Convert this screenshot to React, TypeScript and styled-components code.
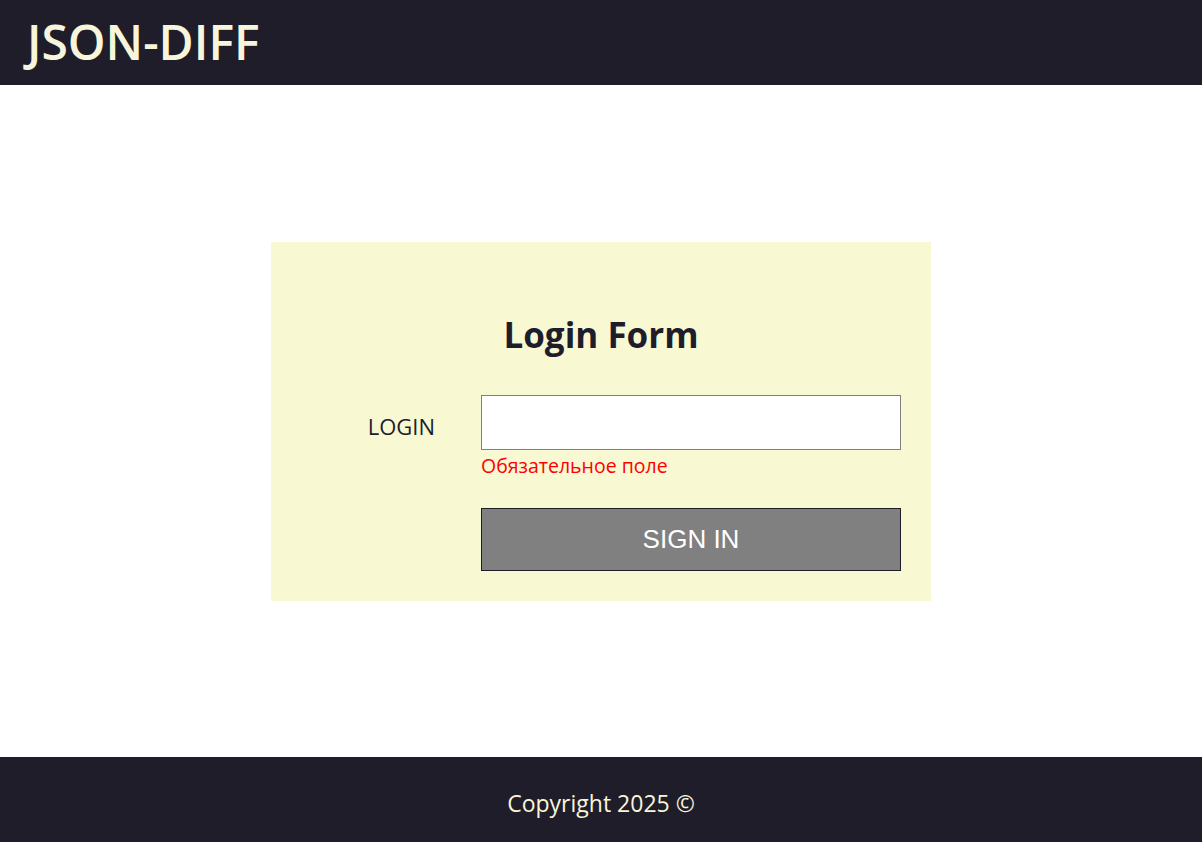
import React from "react";
import styled, { createGlobalStyle } from "styled-components";

const Global = createGlobalStyle`
  html, body { margin: 0; padding: 0; height: 100%; }
  body { font-family: "Open Sans", "Noto Sans", sans-serif; background: #ffffff; }
  #root { height: 100%; }
`;

const Page = styled.div`
  display: flex;
  flex-direction: column;
  height: 842px;
`;

const Header = styled.header`
  height: 85px;
  background: #201d2b;
  display: flex;
  align-items: center;
  padding-left: 27px;
  flex-shrink: 0;
`;

const Logo = styled.h1`
  margin: 0;
  font-size: 48px;
  font-weight: 600;
  color: #f7f6dc;
  line-height: 85px;
  padding-bottom: 2px;
`;

const Main = styled.main`
  flex: 1;
  display: flex;
  align-items: center;
  justify-content: center;
`;

const Card = styled.form`
  width: 660px;
  height: 359px;
  box-sizing: border-box;
  background: #f8f8d3;
  display: flex;
  flex-direction: column;
  align-items: center;
  padding-top: 71px;
`;

const Title = styled.h2`
  margin: 0 0 38px 0;
  font-size: 35px;
  font-weight: 700;
  color: #201d2b;
  line-height: 44px;
`;

const Row = styled.div`
  display: grid;
  grid-template-columns: 210px 420px;
  width: 630px;
  align-self: flex-start;
`;

const Label = styled.label`
  justify-self: end;
  margin-right: 46px;
  font-size: 22px;
  color: #201d2b;
  height: 55px;
  padding-top: 8px;
  box-sizing: border-box;
  display: flex;
  align-items: center;
`;

const Field = styled.div`
  display: flex;
  flex-direction: column;
`;

const Input = styled.input`
  box-sizing: border-box;
  width: 420px;
  height: 55px;
  border: 1px solid #808080;
  background: #fff;
  outline: none;
  font-size: 20px;
  padding: 0 10px;
`;

const ErrorText = styled.span`
  color: #ff0000;
  font-size: 19.5px;
  line-height: 32px;
  margin-bottom: 26px;
`;

const Button = styled.button`
  box-sizing: border-box;
  width: 420px;
  height: 63px;
  background: #808080;
  border: 1px solid #201d2b;
  color: #ffffff;
  font-family: "Liberation Sans", Arial, sans-serif;
  font-size: 26px;
  cursor: pointer;
`;

const Footer = styled.footer`
  height: 85px;
  background: #201d2b;
  display: flex;
  align-items: center;
  justify-content: center;
  flex-shrink: 0;
  padding-top: 6px;
  box-sizing: border-box;
`;

const Copy = styled.span`
  color: #f7f6dc;
  font-size: 23px;
`;

export default function App() {
  return (
    <>
      <Global />
      <Page>
        <Header>
          <Logo>JSON-DIFF</Logo>
        </Header>
        <Main>
          <Card onSubmit={(e) => e.preventDefault()}>
            <Title>Login Form</Title>
            <Row>
              <Label htmlFor="login">LOGIN</Label>
              <Field>
                <Input id="login" type="text" />
                <ErrorText>Обязательное поле</ErrorText>
                <Button type="submit">SIGN IN</Button>
              </Field>
            </Row>
          </Card>
        </Main>
        <Footer>
          <Copy>Copyright 2025 ©</Copy>
        </Footer>
      </Page>
    </>
  );
}
